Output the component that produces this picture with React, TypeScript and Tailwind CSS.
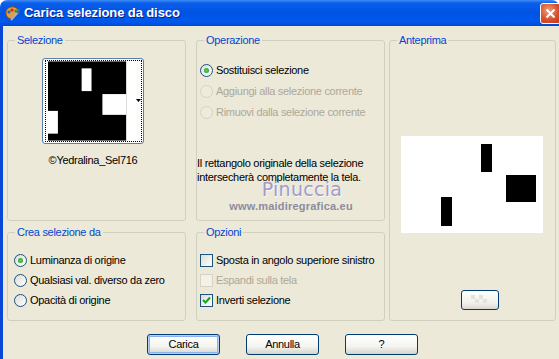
import React from "react";

const GroupBox = ({
  title,
  className,
  children,
}: {
  title: string;
  className?: string;
  children?: React.ReactNode;
}) => (
  <div className={`relative border border-[#D0D0BF] rounded-[3px] ${className ?? ""}`}>
    <span className="absolute -top-[7px] left-[7px] px-[2px] bg-[#ECE9D8] text-[#0046D5] leading-[13px]">
      {title}
    </span>
    {children}
  </div>
);

const Radio = ({ checked, disabled }: { checked?: boolean; disabled?: boolean }) => (
  <span
    className={`w-[13px] h-[13px] rounded-full border flex items-center justify-center shrink-0 ${
      disabled
        ? "border-[#D6D3C4] bg-[#EEEBDC]"
        : "border-[#1C5180] bg-[linear-gradient(135deg,#DCDCD7,#FFFFFF)]"
    }`}
  >
    {checked && <span className="w-[5px] h-[5px] rounded-full bg-[radial-gradient(circle,#5CD15C,#1B9A1B)]" />}
  </span>
);

const Check = ({ checked, disabled }: { checked?: boolean; disabled?: boolean }) => (
  <span
    className={`w-[13px] h-[13px] border flex items-center justify-center shrink-0 ${
      disabled
        ? "border-[#D6D3C4] bg-[#F3F1E8]"
        : "border-[#1C5180] bg-[linear-gradient(135deg,#DCDCD7,#FFFFFF)]"
    }`}
  >
    {checked && (
      <svg width="9" height="9" viewBox="0 0 9 9">
        <path d="M1 4 L3.5 6.5 L8 1.5" stroke="#21A121" strokeWidth="2" fill="none" />
      </svg>
    )}
  </span>
);

const XpButton = ({ label, isDefault }: { label: string; isDefault?: boolean }) => (
  <div
    className={`w-[73px] h-[21px] rounded-[3px] border border-[#003C74] flex items-center justify-center bg-[linear-gradient(180deg,#FFFFFF_0%,#F4F4F0_60%,#D8D4C8_100%)] ${
      isDefault ? "shadow-[inset_0_0_0_1px_#B8D0F8,inset_0_0_0_2px_#8CB0EC]" : ""
    }`}
  >
    {label}
  </div>
);

export default function App() {
  return (
    <div className="w-[559px] h-[359px] overflow-hidden flex flex-col font-['Liberation_Sans',Arial,sans-serif] text-[11px] tracking-[-0.3px] whitespace-nowrap text-black">
      {/* title bar */}
      <div className="h-[26px] shrink-0 rounded-t-[7px] flex items-center bg-[linear-gradient(180deg,#3D8DF5_0%,#0A5EEA_12%,#0054E3_45%,#0058EB_85%,#0048D6_100%)]">
        <svg width="17" height="17" viewBox="0 0 17 17" className="ml-[4px]">
          <path d="M2 9 C1 4 6 1 10 2 C15 3 16 8 13 10 C11 11 10 10 9 12 C8 15 3 14 2 9 Z" fill="#E0A040" stroke="#8A4A10" strokeWidth="1" />
          <circle cx="5" cy="7" r="1.6" fill="#2060E0" />
          <circle cx="8" cy="5" r="1.6" fill="#E02020" />
          <circle cx="12" cy="6" r="1.6" fill="#20A020" />
          <path d="M7 15 L14 7" stroke="#B0B0B0" strokeWidth="2" />
          <path d="M13 8 L16 4" stroke="#4060C0" strokeWidth="2" />
        </svg>
        <span className="ml-[3px] text-white font-bold text-[13px] [text-shadow:1px_1px_0_#0A1F8F] tracking-[-0.1px]">
          Carica selezione da disco
        </span>
        <div className="ml-auto mr-[-2px] w-[21px] h-[21px] rounded-[3px] border border-white flex items-center justify-center bg-[radial-gradient(circle_at_40%_35%,#F0A080,#D8502A_55%,#C03A18)]">
          <svg width="11" height="11" viewBox="0 0 11 11">
            <path d="M1.5 1.5 L9.5 9.5 M9.5 1.5 L1.5 9.5" stroke="white" strokeWidth="2" />
          </svg>
        </div>
      </div>

      {/* body */}
      <div className="flex-1 bg-[#ECE9D8] border-l-[3px] border-l-[#0A46D8] pt-[14px] pl-[4px]">
        <div className="flex">
          <div className="flex flex-col w-[179px] gap-[11px]">
            <GroupBox title="Selezione" className="h-[181px]">
              <div className="ml-[34px] mt-[17px] w-[102px] flex flex-col items-center">
                <div className="w-[102px] h-[86px] rounded-[3px] border border-[#5A7EAE] bg-[#FBFBF9] pt-[1px] pl-[2px] pr-[1px] pb-[1px]">
                  <div className="w-full h-full border border-dotted border-black flex items-start">
                    <svg width="89" height="80" viewBox="0 0 89 80" className="ml-[2px]">
                      <rect x="0" y="0" width="89" height="80" fill="white" />
                      <rect x="0" y="0" width="79" height="80" fill="black" />
                      <rect x="34" y="7" width="10" height="23" fill="white" />
                      <rect x="55" y="33" width="24" height="21" fill="white" />
                      <rect x="0" y="50" width="10" height="23" fill="white" />
                    </svg>
                    <svg width="5" height="3" viewBox="0 0 5 3" className="mt-[38px]">
                      <path d="M0 0 L5 0 L2.5 3 Z" fill="black" />
                    </svg>
                  </div>
                </div>
                <div className="mt-[10px] leading-[13px]">©Yedralina_Sel716</div>
              </div>
            </GroupBox>
            <GroupBox title="Crea selezione da" className="h-[89px]">
              <div className="pt-[17px] pl-[6px] flex flex-col">
                <div className="h-[20px] flex items-center gap-[3px]">
                  <Radio checked />
                  <span>Luminanza di origine</span>
                </div>
                <div className="h-[20px] flex items-center gap-[3px]">
                  <Radio />
                  <span>Qualsiasi val. diverso da zero</span>
                </div>
                <div className="h-[20px] flex items-center gap-[3px]">
                  <Radio />
                  <span>Opacità di origine</span>
                </div>
              </div>
            </GroupBox>
          </div>

          <div className="flex flex-col w-[189px] gap-[11px] ml-[10px]">
            <GroupBox title="Operazione" className="h-[181px]">
              <div className="pt-[19px] pl-[3px] flex flex-col">
                <div className="h-[21px] flex items-center gap-[3px]">
                  <Radio checked />
                  <span>Sostituisci selezione</span>
                </div>
                <div className="h-[21px] flex items-center gap-[3px] text-[#ACA899]">
                  <Radio disabled />
                  <span>Aggiungi alla selezione corrente</span>
                </div>
                <div className="h-[21px] flex items-center gap-[3px] text-[#ACA899]">
                  <Radio disabled />
                  <span>Rimuovi dalla selezione corrente</span>
                </div>
              </div>
              <p className="mt-[33px] leading-[14px]">
                Il rettangolo originale della selezione
                <br />
                intersecherà completamente la tela.
              </p>
              {/* watermark */}
              <div className="absolute left-[36px] top-[139px] w-[130px] flex flex-col items-center pointer-events-none tracking-normal">
                <span className="text-[19px] leading-[19px] font-['DejaVu_Sans',sans-serif] text-[#A29CC4] [text-shadow:1px_1px_0_#F8F8FF] tracking-[0.3px] ml-[8px]">
                  Pinuccia
                </span>
                <span className="text-[11px] leading-[14px] font-bold font-['Liberation_Sans',sans-serif] text-[#8C8CA0] -ml-[14px] tracking-[0.2px]">
                  www.maidiregrafica.eu
                </span>
              </div>
            </GroupBox>
            <GroupBox title="Opzioni" className="h-[89px]">
              <div className="pt-[17px] pl-[3px] flex flex-col">
                <div className="h-[20px] flex items-center gap-[3px]">
                  <Check />
                  <span>Sposta in angolo superiore sinistro</span>
                </div>
                <div className="h-[20px] flex items-center gap-[3px] text-[#ACA899]">
                  <Check disabled />
                  <span>Espandi sulla tela</span>
                </div>
                <div className="h-[20px] flex items-center gap-[3px]">
                  <Check checked />
                  <span>Inverti selezione</span>
                </div>
              </div>
            </GroupBox>
          </div>

          <GroupBox title="Anteprima" className="w-[167px] h-[281px] ml-[4px]">
            <div className="flex flex-col">
              <svg width="142" height="97" viewBox="0 0 142 97" className="ml-[11px] mt-[95px]">
                <rect x="0" y="0" width="142" height="97" fill="white" />
                <rect x="80" y="8" width="11" height="28" fill="black" />
                <rect x="105" y="39" width="30" height="27" fill="black" />
                <rect x="40" y="61" width="11" height="29" fill="black" />
              </svg>
              <div className="ml-[71px] mt-[57px] w-[38px] h-[20px] rounded-[3px] border border-[#003C74] bg-[linear-gradient(180deg,#FFFFFF,#F0EFEA_70%,#DAD6CB)] flex items-center justify-center">
                <svg width="18" height="10" viewBox="0 0 18 10">
                  <rect x="0" y="0" width="4" height="4" fill="#E4E2DA" />
                  <rect x="8" y="0" width="4" height="4" fill="#E4E2DA" />
                  <rect x="4" y="4" width="4" height="4" fill="#E4E2DA" />
                  <rect x="12" y="4" width="4" height="4" fill="#E4E2DA" />
                </svg>
              </div>
            </div>
          </GroupBox>
        </div>

        <div className="flex gap-[26px] pl-[140px] mt-[13px]">
          <XpButton label="Carica" isDefault />
          <XpButton label="Annulla" />
          <XpButton label="?" />
        </div>
      </div>
    </div>
  );
}
